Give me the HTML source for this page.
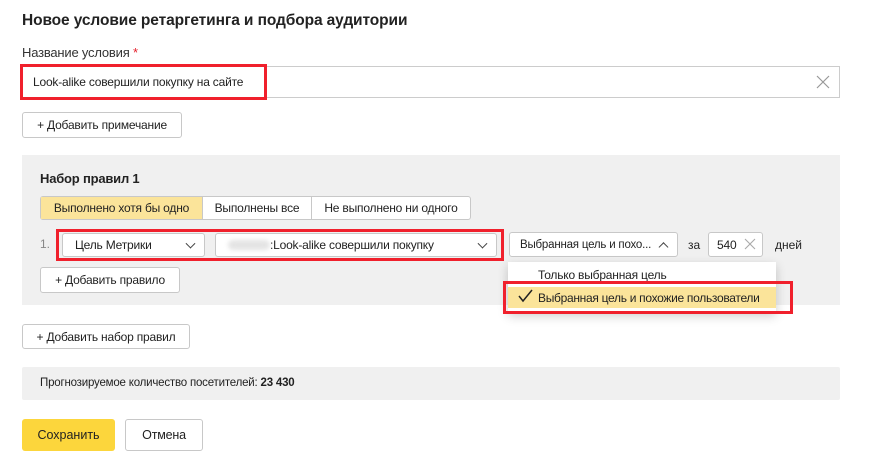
<!DOCTYPE html>
<html><head><meta charset="utf-8"><style>
*{box-sizing:border-box;margin:0;padding:0}
body{width:872px;height:462px;background:#fff;font-family:"Liberation Sans","Noto Sans CJK SC",sans-serif;color:#222;position:relative;overflow:hidden;font-size:12px}
.a{position:absolute}
.btn{position:absolute;border:1px solid #c8c8c8;border-radius:3px;background:#fff;display:flex;align-items:center;justify-content:center;font-size:12px;color:#222;letter-spacing:-0.2px}
.red{position:absolute;border:3px solid #f0202c}
.sel{position:absolute;background:#fff;border:1px solid #c8c8c8;border-radius:3px;font-size:12px;display:flex;align-items:center;padding-left:12px;letter-spacing:-0.2px;white-space:nowrap}
.chev{position:absolute;right:10px;top:50%;width:7px;height:7px;border-right:1.3px solid #444;border-bottom:1.3px solid #444;transform:translateY(-70%) rotate(45deg)}
</style></head><body>
<div class="a" style="left:22px;top:12px;font-size:15.5px;font-weight:bold;color:#222;letter-spacing:-0.1px">Новое условие ретаргетинга и подбора аудитории</div>
<div class="a" style="left:22px;top:45px;font-size:13px;color:#333;letter-spacing:-0.2px">Название условия <span style="color:#e5202c">*</span></div>
<div class="a" style="left:22px;top:66px;width:818px;height:32px;border:1px solid #ccc;background:#fff"></div>
<div class="a" style="left:33px;top:75px;font-size:12px;letter-spacing:-0.2px">Look-alike совершили покупку на сайте</div>
<svg class="a" style="left:816px;top:75px" width="14" height="14"><path d="M1 1L13 13M13 1L1 13" stroke="#999" stroke-width="1.2"/></svg>
<div class="red" style="left:20px;top:64px;width:247px;height:36px"></div>
<div class="btn" style="left:22px;top:112px;width:160px;height:26px">+ Добавить примечание</div>

<div class="a" style="left:22px;top:155px;width:818px;height:150px;background:#f0f0f0"></div>
<div class="a" style="left:40px;top:171px;font-size:13px;font-weight:bold;letter-spacing:-0.2px">Набор правил 1</div>
<div class="a" style="left:40px;top:196px;width:431px;height:24px;border:1px solid #c8c8c8;border-radius:3px;background:#fff;display:flex;font-size:12px;letter-spacing:-0.2px">
<div style="width:162px;background:#fbe49a;display:flex;align-items:center;justify-content:center;border-right:1px solid #c8c8c8">Выполнено хотя бы одно</div>
<div style="width:109px;display:flex;align-items:center;justify-content:center;border-right:1px solid #c8c8c8">Выполнены все</div>
<div style="flex:1;display:flex;align-items:center;justify-content:center">Не выполнено ни одного</div></div>
<div class="a" style="left:40px;top:237px;color:#888;font-size:12px">1.</div>
<div class="sel" style="left:62px;top:233px;width:143px;height:24px">Цель Метрики<i class="chev"></i></div>
<div class="sel" style="left:215px;top:233px;width:282px;height:24px;padding-left:12px"><span style="display:inline-block;width:42px;height:10px;background:#e4e4e4;border-radius:5px;filter:blur(2px)"></span>:Look-alike совершили покупку<i class="chev"></i></div>
<div class="red" style="left:56px;top:229px;width:448px;height:32px"></div>
<div class="sel" style="left:509px;top:232px;width:169px;height:25px;padding-left:10px;font-size:11.5px">Выбранная цель и похо...<i class="chev" style="transform:translateY(-20%) rotate(225deg)"></i></div>
<div class="a" style="left:688px;top:238px;font-size:12px">за</div>
<div class="sel" style="left:708px;top:232px;width:55px;height:25px;padding-left:8px">540</div>
<svg class="a" style="left:744px;top:238px" width="12" height="12"><path d="M1 1L11 11M11 1L1 11" stroke="#aaa" stroke-width="1.1"/></svg>
<div class="a" style="left:775px;top:238px;font-size:12px">дней</div>
<div class="btn" style="left:40px;top:267px;width:140px;height:26px">+ Добавить правило</div>

<div class="a" style="left:508px;top:262px;width:268px;height:50px;background:#fff;box-shadow:0 4px 10px rgba(0,0,0,.2)"></div>
<div class="a" style="left:538px;top:268px;font-size:12px;letter-spacing:-0.2px">Только выбранная цель</div>
<div class="a" style="left:508px;top:287px;width:268px;height:21px;background:#fbe49a"></div>
<svg class="a" style="left:518px;top:289px" width="16" height="14"><path d="M1 7L5 12L14 1" stroke="#222" stroke-width="1.5" fill="none"/></svg>
<div class="a" style="left:538px;top:291px;font-size:12px;letter-spacing:-0.3px">Выбранная цель и похожие пользователи</div>
<div class="red" style="left:503px;top:281px;width:290px;height:33px"></div>

<div class="btn" style="left:22px;top:324px;width:168px;height:25px">+ Добавить набор правил</div>
<div class="a" style="left:22px;top:367px;width:818px;height:33px;background:#f0f0f0;border-radius:2px"></div>
<div class="a" style="left:40px;top:377px;font-size:11.5px;letter-spacing:-0.2px">Прогнозируемое количество посетителей: <b>23 430</b></div>
<div class="a" style="left:22px;top:419px;width:93px;height:32px;background:#fcd63c;border-radius:3px;display:flex;align-items:center;justify-content:center;font-size:12.5px">Сохранить</div>
<div class="btn" style="left:125px;top:419px;width:78px;height:32px;font-size:12.5px">Отмена</div>
</body></html>
